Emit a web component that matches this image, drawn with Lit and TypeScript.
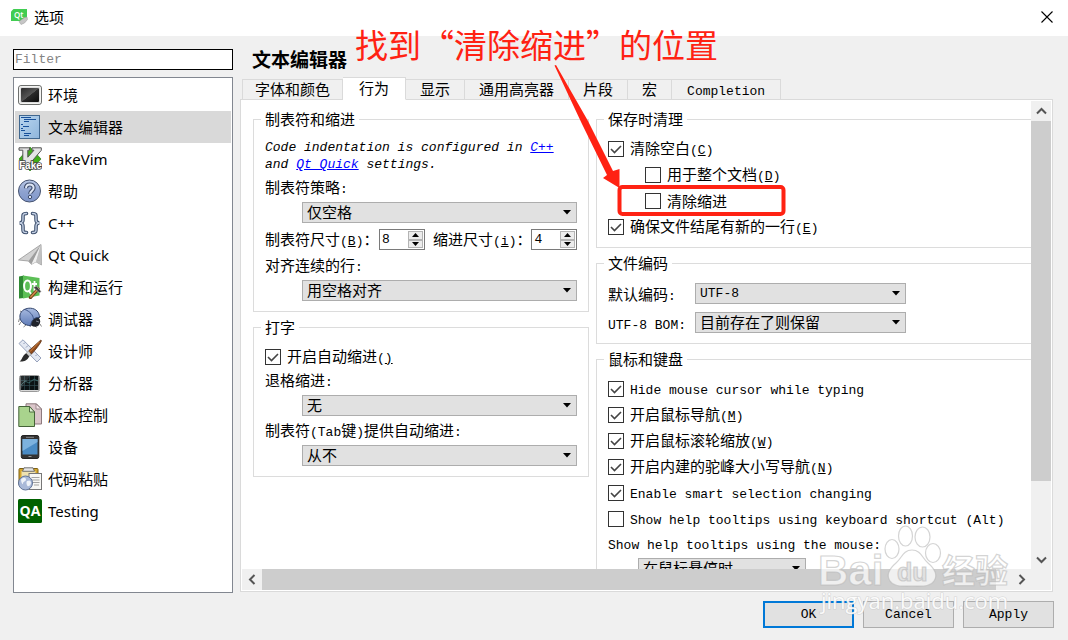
import { LitElement, html, svg, css } from "lit";
import { customElement, state, property } from "lit/decorators.js";
import { classMap } from "lit/directives/class-map.js";

// Splits a caption into ideographs and Latin runs, so each run gets its own face.
const mix = (text: string) =>
  text
    .split(/([\x20-\x7e]+)/)
    .filter((part) => part)
    .map((part) => (/^[\x20-\x7e]/.test(part) ? html`<span class="latin">${part}</span>` : part));

// Caption followed by its mnemonic in parentheses.
const keyed = (text: string, key: string, tail = "") =>
  html`${mix(text)}<span class="latin">(<u>${key}</u>)</span>${tail}`;

const base = css`
  * {
    box-sizing: border-box;
  }
  .latin {
    font-family: "Liberation Mono", monospace;
    font-size: 13px;
  }
`;

const icons: Record<string, unknown> = {
  env: svg`
    <defs><linearGradient id="e" x1="0" y1="0" x2="1" y2="1"><stop offset="0" stop-color="#2b2b2b"/><stop offset=".5" stop-color="#555"/><stop offset=".52" stop-color="#2a2a2a"/><stop offset="1" stop-color="#0c0c0c"/></linearGradient></defs>
    <rect x=".5" y="2.5" width="23" height="19" rx="2.5" fill="#dcdcdc" stroke="#6e706e"/>
    <rect x="1.5" y="3.5" width="21" height="17" rx="2" fill="none" stroke="#f4f4f2"/>
    <rect x="3" y="5" width="18" height="14" rx="1" fill="url(#e)"/>`,
  editor: svg`
    <defs><linearGradient id="t" x1="0" y1="0" x2="1" y2="1"><stop offset="0" stop-color="#b9d6ef"/><stop offset="1" stop-color="#8fb6dc"/></linearGradient></defs>
    <rect x="1.5" y=".5" width="20" height="23" fill="url(#t)" stroke="#41688f"/>
    <g stroke="#17509a"><path d="M3 2.500h10M6 4.500h12M6 6.500h5M3 9.500h2M5 11.500h6M3 13.500h2M3 15.500h4M6 18.500h7M6 20.500h5" /></g>`,
  vim: svg`
    <path d="M12 0l11 12-11 12L1 12z" fill="#3fae18" stroke="#1d6b0a" stroke-width=".6"/>
    <path d="M1 .8h10.500v2.400H9.800v7L16 3.200h-2V.8h9.300v2.500L9.500 19.500H4.800V3.200H1z" fill="#e4e4e4" stroke="#555" stroke-width="1"/>
    <text x="1" y="22" font-family="Liberation Sans" font-weight="700" font-size="10" fill="#fff" stroke="#444" stroke-width="1.600" paint-order="stroke">Fake</text>`,
  help: svg`
    <defs><linearGradient id="h" x1="0" y1="0" x2="0" y2="1"><stop offset="0" stop-color="#bccbe8"/><stop offset=".5" stop-color="#8fa3d0"/><stop offset="1" stop-color="#7f96ca"/></linearGradient></defs>
    <circle cx="11.500" cy="12" r="11" fill="url(#h)" stroke="#46536f" stroke-width="1"/>
    <path d="M8 9.200C8 6.600 9.600 5.500 11.800 5.500S15.600 6.800 15.600 9c0 2.800-3.500 3-3.500 5.800" fill="none" stroke="#3f4d6c" stroke-width="4.200"/>
    <path d="M8 9.200C8 6.600 9.600 5.500 11.800 5.500S15.600 6.800 15.600 9c0 2.800-3.500 3-3.500 5.800" fill="none" stroke="#dfe7f6" stroke-width="2"/>
    <circle cx="12" cy="18" r="1.700" fill="#dfe7f6" stroke="#3f4d6c"/>`,
  braces: svg`
    <g fill="none" stroke-linecap="round"><g stroke="#3f516e" stroke-width="3.600"><path d="M8.500 2.500C4.500 2.500 5 4 5 7s.2 4.200-3 5c3.200.8 3 2 3 5s-.5 4.500 3.500 4.500M14.500 2.500c4 0 3.500 1.500 3.500 4.500s-.2 4.200 3 5c-3.200.8-3 2-3 5s.5 4.500-3.500 4.500"/></g>
    <g stroke="#c4d0e4" stroke-width="1.400"><path d="M8.500 2.500C4.500 2.500 5 4 5 7s.2 4.200-3 5c3.200.8 3 2 3 5s-.5 4.500 3.500 4.500M14.500 2.500c4 0 3.500 1.500 3.500 4.500s-.2 4.200 3 5c-3.200.8-3 2-3 5s.5 4.500-3.500 4.500"/></g></g>`,
  plane: svg`
    <path d="M.5 17L23 1.500 23.500 22l-5.500-3.200-4.500 2.500-3.300-3.300z" fill="#d2d2d2" stroke="#8b8b8b" stroke-width=".7"/>
    <path d="M23 1.500L10.500 18l3 3.200z" fill="#9d9d9d"/><path d="M23 1.500L13.500 21.200l4.500-2.400z" fill="#eee"/><path d="M23 1.500L18 18.800l5.500 3.200z" fill="#c0c0c0"/>`,
  build: svg`
    <path d="M1 1.500L6 .5v22.500l-5 .6z" fill="#2f8a34"/><path d="M5 .5L21.500 3v17.500L5 23.500z" fill="#5cbf56"/>
    <ellipse cx="9.500" cy="11" rx="3.400" ry="5.600" fill="none" stroke="#fff" stroke-width="2"/><path d="M10.500 15l2.500 4M16.500 6v9.500q0 1.500 1.800 1M14 9h5" fill="none" stroke="#fff" stroke-width="1.800"/>
    <path d="M12.500 22.500L20 14" stroke="#6b3d18" stroke-width="3.400" stroke-linecap="round"/><path d="M12.800 22L20 14" stroke="#cf8a4a" stroke-width="1.600" stroke-linecap="round"/>
    <path d="M15.500 12.500l3-1.500 4.500 5.500-1.500 1.500-3-3z" fill="#3e3e3e" stroke="#bbb" stroke-width=".6"/>`,
  bug: svg`
    <defs><linearGradient id="b" x1="0" y1="0" x2="0" y2="1"><stop offset="0" stop-color="#a9bbe0"/><stop offset="1" stop-color="#5f7cb8"/></linearGradient></defs>
    <path d="M1.500 11.500l-1 3.500M3 15l-2 3M8 18l-2.500 2M21 11l2-2M22 17l1.500 2.500M17 19l1.500 1.500M4 5L2 4M13 18l-1 2" stroke="#777" stroke-width=".9"/>
    <circle cx="17" cy="14.500" r="5.200" fill="#20242c"/>
    <path d="M2 8C3 3 8 1 12.500 1.200c5.500.3 9 4 9 9.300-5-.5-8.500 3-8.700 8.200C6 18.500 1 14 2 8z" fill="url(#b)" stroke="#33466e" stroke-width="1"/>
    <path d="M7 2.500c5 2 8 5.500 8.500 9.500" fill="none" stroke="#40578a"/><path d="M18 14l3 1" stroke="#7a808c"/>`,
  design: svg`
    <path d="M1 4.500L5 .8 23 19l-4 4z" fill="#e3e8f2" stroke="#8d9ab5" stroke-width=".9"/><path d="M7 3.500L5.500 5M10 6.500L8 8.500M13 9.500L11.500 11M16 12.500l-2 2M19 15.500L17.500 17" stroke="#7a88a8" stroke-width=".8"/>
    <path d="M22.800 1L10.500 12l2.700 3.200C17 11.500 21.500 6 23.500 1.800z" fill="#8f4a1b" stroke="#54290d" stroke-width=".7"/><path d="M21.500 2.800L12 12.600" stroke="#d88c4a" stroke-width=".9"/>
    <path d="M10.500 12l2.700 3.200-2.200 2.200-3-3z" fill="#d0d0d0" stroke="#777" stroke-width=".5"/><path d="M8.200 14.300l3 3.200C9 22 5 23 1.500 22.500 4.500 21 4 16.500 8.200 14.300z" fill="#2b2b2b"/>`,
  scope: svg`
    <rect x="1.500" y="4.500" width="20" height="16" rx="2" fill="#d7d7d7" stroke="#9a9a9a"/><rect x="2.500" y="5" width="18" height="14" fill="#0b1214"/>
    <path d="M6.500 5v14M11.500 5v14M16.500 5v14M3 9.500h17M3 14.500h17" stroke="#2f4b50" stroke-width=".7"/><path d="M3 14l4-4 4 2 5-4 4 2" stroke="#4c8a8a" stroke-width=".6" fill="none"/><path d="M3 18L12 5H3z" fill="#fff" opacity=".12"/>`,
  files: svg`
    <path d="M8 .8h10.500L23.500 6v15H8z" fill="#dbc6ca" stroke="#8d7a7e"/><path d="M18 1v5h5.500z" fill="#f2e4e6" stroke="#8d7a7e" stroke-width=".8"/>
    <path d="M.8 3.500h11L16.500 9v14.500H.8z" fill="#a9d38d" stroke="#456339"/><path d="M11.500 3.500V9h5z" fill="#dff0d4" stroke="#456339" stroke-width=".9"/>`,
  tablet: svg`
    <rect x="3.300" y=".5" width="17.500" height="23" rx="1.800" fill="#333" stroke="#222"/><path d="M8 2.300h8" stroke="#888"/><rect x="4.500" y="4" width="15" height="15.500" fill="#4a8bc4"/><path d="M4.500 4h15v3L4.500 16z" fill="#7db2de"/><path d="M10.500 21.500h3" stroke="#999"/>`,
  paste: svg`
    <rect x="1" y="1.500" width="19" height="17" rx="1" fill="#d5a62c" stroke="#7d6014"/><rect x="3.500" y="4" width="14" height="13" fill="#efe2b0"/><path d="M6 .8h9l1.500 3.500h-12z" fill="#e4e4e4" stroke="#555" stroke-width=".8"/>
    <rect x="11" y="6.500" width="12.500" height="16" fill="#f7f7f5" stroke="#777"/><path d="M13.500 10.500h8M13.500 13h8M15 15.500h6.500M16 18h5" stroke="#999" stroke-width=".9"/>
    <circle cx="7.500" cy="16" r="7" fill="#a9b9d8" stroke="#5f7296"/><path d="M3 12.500c2-2.500 5-2 5 0s-3 2-3 4-2-1-2-4zM9 14c3-1.500 4 0 4 2s-2.500 4-3.500 3S8 15 9 14z" fill="#eef2f8"/>`,
  qa: svg`
    <rect width="24" height="24" rx="1.500" fill="#006100"/><text x="12" y="17" text-anchor="middle" font-family="Open Sans" font-weight="700" font-size="14" fill="#fff">QA</text>`,
};

const pages: [string, string][] = [
  ["env", "环境"],
  ["editor", "文本编辑器"],
  ["vim", "FakeVim"],
  ["help", "帮助"],
  ["braces", "C++"],
  ["plane", "Qt Quick"],
  ["build", "构建和运行"],
  ["bug", "调试器"],
  ["design", "设计师"],
  ["scope", "分析器"],
  ["files", "版本控制"],
  ["tablet", "设备"],
  ["paste", "代码粘贴"],
  ["qa", "Testing"],
];

const tabs = ["字体和颜色", "行为", "显示", "通用高亮器", "片段", "宏", "Completion"];

@customElement("page-list")
class PageList extends LitElement {
  @state() current = "editor";

  static styles = [
    base,
    css`
      :host {
        display: flex;
        flex-direction: column;
        gap: 7px;
        min-height: 0;
      }
      .filter {
        height: 21px;
        padding: 0 1px;
        border: 1px solid #000;
        background: #fff;
        font: 13px/19px "Liberation Mono", monospace;
        outline: 0;
      }
      .filter::placeholder {
        color: #848484;
        opacity: 1;
      }
      .list {
        flex: 1;
        min-height: 0;
        margin: 0;
        padding: 1px;
        list-style: none;
        overflow: hidden;
        background: #fff;
        border: 1px solid #828790;
      }
      .item {
        display: flex;
        align-items: center;
        gap: 6px;
        width: 100%;
        height: 32px;
        padding: 0 3px;
        border: 0;
        background: none;
        color: #000;
        font: 15px/20px "Noto Sans", "Noto Sans CJK SC", sans-serif;
        text-align: left;
      }
      .on {
        background: #d9d9d9;
      }
      .icon {
        width: 24px;
        height: 24px;
        flex: none;
      }
    `,
  ];

  render() {
    return html`
      <input class="filter" type="text" placeholder="Filter" aria-label="Filter" />
      <ul class="list">
        ${pages.map(
          ([id, name]) => html`<li>
            <button class=${classMap({ item: true, on: id === this.current })} @click=${() => (this.current = id)}>
              <svg class="icon" viewBox="0 0 24 24" aria-hidden="true">${icons[id]}</svg>${name}
            </button>
          </li>`
        )}
      </ul>
    `;
  }
}

@customElement("scroll-bar")
class ScrollBar extends LitElement {
  @property({ type: Boolean, reflect: true }) vertical = false;
  @property({ type: Number }) size = 50;

  static styles = [
    base,
    css`
      :host {
        display: flex;
        background: #f0f0f0;
      }
      :host([vertical]) {
        flex-direction: column;
      }
      .step {
        flex: none;
        display: grid;
        place-items: center;
        width: 20px;
        height: 20px;
        padding: 0;
        border: 0;
        background: none;
      }
      .track {
        flex: 1;
        min-height: 0;
        min-width: 0;
      }
      .thumb {
        background: #cdcdcd;
        height: 100%;
      }
      path {
        fill: none;
        stroke: #555;
        stroke-width: 2;
      }
    `,
  ];

  render() {
    const [back, next] = this.vertical
      ? ["M1 7.500L5.500 3L10 7.500", "M1 3.500L5.500 8L10 3.500"]
      : ["M7.500 1L3 5.500L7.500 10", "M3.500 1L8 5.500L3.500 10"];
    const span = this.vertical ? `height:${this.size}%` : `width:${this.size}%`;
    return html`
      <button class="step" aria-label="back"><svg width="11" height="11"><path d=${back} /></svg></button>
      <div class="track"><div class="thumb" style=${span}></div></div>
      <button class="step" aria-label="forward"><svg width="11" height="11"><path d=${next} /></svg></button>
    `;
  }
}

@customElement("behavior-page")
class BehaviorPage extends LitElement {
  static styles = [
    base,
    css`
      :host {
        display: grid;
        grid-template-columns: 336px 1fr;
        gap: 7px;
        align-items: start;
        width: calc(100% + 14px);
        padding: 9px 11px;
        font: 15px/17px "Noto Sans CJK SC", sans-serif;
        white-space: nowrap;
      }
      .column {
        display: flex;
        flex-direction: column;
        gap: 6px;
        min-width: 0;
      }
      fieldset {
        margin: 0;
        min-width: 0;
        padding: 10px 7px;
        border: 1px solid #dcdcdc;
      }
      legend {
        padding: 0 4px;
        height: 19px;
      }
      .rows {
        display: flex;
        flex-direction: column;
        gap: 5px;
        padding: 0 4px;
      }
      .note {
        margin: 0;
        font: italic 13px/17px "Liberation Mono", monospace;
        white-space: normal;
      }
      a {
        color: #00f;
      }
      .label {
        height: 19px;
      }
      select {
        appearance: none;
        height: 21px;
        padding: 0 20px 2px 4px;
        border: 1px solid #adadad;
        border-radius: 0;
        color: #000;
        font: 15px/17px "Noto Sans CJK SC", sans-serif;
        background: #e1e1e1
          url("data:image/svg+xml,%3Csvg xmlns='http://www.w3.org/2000/svg' width='9' height='5'%3E%3Cpath d='M1 0h8L5 4.500z'/%3E%3C/svg%3E")
          right 5px center no-repeat;
      }
      select.latin {
        padding-bottom: 0;
        font: 13px/17px "Liberation Mono", monospace;
      }
      .indent {
        margin-left: 37px;
      }
      .hover {
        align-self: flex-start;
        width: 168px;
        margin-left: 30px;
      }
      .sizes {
        display: grid;
        grid-template-columns: 114px 46px 1fr 46px;
        align-items: center;
        height: 23px;
      }
      .sizes label {
        height: 19px;
      }
      .second {
        padding-left: 8px;
      }
      .spin {
        display: flex;
        height: 21px;
        padding: 1px;
        border: 1px solid #7a7a7a;
        background: #fff;
      }
      .number {
        appearance: textfield;
        flex: 1;
        min-width: 0;
        padding: 0 1px;
        border: 0;
        font: 13px/17px "Liberation Mono", monospace;
      }
      .number::-webkit-inner-spin-button {
        display: none;
      }
      .steps {
        display: grid;
        width: 15px;
      }
      .step {
        display: grid;
        place-items: center;
        padding: 0;
        border: 1px solid #b4b4b4;
        background: #ececec;
        min-height: 0;
      }
      .checks {
        display: flex;
        flex-direction: column;
        gap: 7px;
        padding-bottom: 1px;
      }
      .check {
        display: flex;
        align-items: center;
        gap: 6px;
        height: 19px;
      }
      .check input {
        appearance: none;
        flex: none;
        width: 16px;
        height: 16px;
        margin: 0;
        border: 1px solid #333;
        background: #fff;
      }
      .check input:checked {
        background: #fff
          url("data:image/svg+xml,%3Csvg xmlns='http://www.w3.org/2000/svg' width='14' height='14'%3E%3Cpath d='M2 7l3.500 3.500L12 4' fill='none' stroke='%23444' stroke-width='1.600'/%3E%3C/svg%3E")
          center no-repeat;
      }
      .check span {
        line-height: 19px;
      }
      .encoding {
        display: grid;
        grid-template-columns: 87px 211px;
        grid-auto-rows: 21px;
        row-gap: 8px;
        padding: 0 4px;
      }
      .encoding label {
        padding-top: 2px;
      }
    `,
  ];

  check(caption: unknown, on: boolean, cls = "") {
    return html`<label class="check ${cls}"><input type="checkbox" ?checked=${on} /><span>${caption}</span></label>`;
  }

  spin(id: string, value: number) {
    return html`<span class="spin">
      <input class="number" id=${id} type="number" .value=${String(value)} />
      <span class="steps">
        <button class="step" aria-label="+"><svg width="7" height="4"><path d="M0 4h7L3.500 0z" /></svg></button>
        <button class="step" aria-label="-"><svg width="7" height="4"><path d="M0 0h7L3.500 4z" /></svg></button>
      </span>
    </span>`;
  }

  render() {
    return html`
      <div class="column">
        <fieldset>
          <legend>制表符和缩进</legend>
          <div class="rows">
            <p class="note">
              Code indentation is configured in <a href="#cpp">C++</a> and <a href="#quick">Qt Quick</a> settings.
            </p>
            <label class="label" for="policy">${mix("制表符策略:")}</label>
            <select class="indent" id="policy"><option>仅空格</option></select>
            <div class="sizes">
              <label for="tab">${keyed("制表符尺寸", "B", "：")}</label>${this.spin("tab", 8)}
              <label class="second" for="ind">${keyed("缩进尺寸", "i", "：")}</label>${this.spin("ind", 4)}
            </div>
            <label class="label" for="align">${mix("对齐连续的行:")}</label>
            <select class="indent" id="align"><option>用空格对齐</option></select>
          </div>
        </fieldset>
        <fieldset>
          <legend>打字</legend>
          <div class="rows">
            ${this.check(html`开启自动缩进<span class="latin">(<u>)</u></span>`, true)}
            <label class="label" for="back">${mix("退格缩进:")}</label>
            <select class="indent" id="back"><option>无</option></select>
            <label class="label" for="tabkey">${mix("制表符(Tab键)提供自动缩进:")}</label>
            <select class="indent" id="tabkey"><option>从不</option></select>
          </div>
        </fieldset>
      </div>
      <div class="column">
        <fieldset>
          <legend>保存时清理</legend>
          <div class="rows">
            <div class="checks">
              ${this.check(keyed("清除空白", "C"), true)} ${this.check(keyed("用于整个文档", "D"), false, "indent")}
              ${this.check("清除缩进", false, "indent")} ${this.check(keyed("确保文件结尾有新的一行", "E"), true)}
            </div>
          </div>
        </fieldset>
        <fieldset>
          <legend>文件编码</legend>
          <div class="encoding">
            <label for="enc">${mix("默认编码:")}</label>
            <select class="latin" id="enc"><option>UTF-8</option></select>
            <label for="bom">${mix("UTF-8 BOM:")}</label>
            <select id="bom"><option>目前存在了则保留</option></select>
          </div>
        </fieldset>
        <fieldset>
          <legend>鼠标和键盘</legend>
          <div class="rows">
            <div class="checks">
              ${this.check(mix("Hide mouse cursor while typing"), true)} ${this.check(keyed("开启鼠标导航", "M"), true)}
              ${this.check(keyed("开启鼠标滚轮缩放", "W"), true)}
              ${this.check(keyed("开启内建的驼峰大小写导航", "N"), true)}
              ${this.check(mix("Enable smart selection changing"), true)}
              ${this.check(mix("Show help tooltips using keyboard shortcut (Alt)"), false)}
            </div>
            <label class="label" for="hover">${mix("Show help tooltips using the mouse:")}</label>
            <select class="hover" id="hover"><option>在鼠标悬停时</option></select>
          </div>
        </fieldset>
      </div>
    `;
  }
}

@customElement("app-root")
class AppRoot extends LitElement {
  @state() tab = "行为";

  static styles = [
    base,
    css`
      :host {
        position: relative;
        display: flex;
        flex-direction: column;
        height: 100vh;
        overflow: hidden;
        background: #f0f0f0;
        color: #000;
        font: 15px/19px "Noto Sans CJK SC", sans-serif;
      }
      .title {
        display: flex;
        align-items: center;
        gap: 6px;
        height: 36px;
        padding: 0 15px 3px 11px;
        background: #fff;
      }
      .caption {
        flex: 1;
      }
      .close {
        display: flex;
        padding: 0;
        border: 0;
        background: none;
      }
      .main {
        flex: 1;
        min-height: 0;
        display: grid;
        grid-template-columns: 220px minmax(0, 1fr);
        grid-template-rows: minmax(0, 1fr);
        gap: 7px;
        padding: 13px 15px 0 13px;
      }
      .content {
        display: flex;
        flex-direction: column;
        padding-bottom: 1px;
      }
      h1 {
        margin: 0;
        padding: 0 12px 6px;
        font-size: 19px;
        line-height: 20px;
      }
      .tabs {
        position: relative;
        display: flex;
        align-items: flex-end;
        height: 25px;
        margin-bottom: -1px;
        padding-left: 2px;
      }
      .tab {
        height: 21px;
        padding: 0 14px 1px;
        border: 1px solid #dadada;
        border-left: 0;
        background: #f0f0f0;
        color: #000;
        font: 15px/18px "Noto Sans CJK SC", sans-serif;
      }
      .tab:first-child {
        padding: 0 12px 1px;
        border-left: 1px solid #dadada;
      }
      .tab:last-child {
        padding: 0 15px 1px;
      }
      .tab.on {
        height: 23px;
        padding: 0 16px 2px;
        background: #fff;
        border-bottom-color: #fff;
      }
      .panel {
        flex: 1;
        min-height: 0;
        display: grid;
        grid-template-columns: minmax(0, 1fr) 20px;
        grid-template-rows: minmax(0, 1fr) 21px;
        padding: 1px;
        border: 1px solid #dadada;
        background: #fff;
      }
      .viewport {
        overflow: hidden;
      }
      .corner {
        background: #f0f0f0;
      }
      .footer {
        display: flex;
        justify-content: flex-end;
        gap: 9px;
        padding: 8px 14px 12px;
      }
      .action {
        width: 91px;
        height: 27px;
        padding: 0;
        border: 1px solid #adadad;
        background: #e1e1e1;
        color: #000;
      }
      .default {
        border: 2px solid #0078d7;
      }
      .callout {
        position: absolute;
        left: 355px;
        top: 22px;
        margin: 0;
        color: #ff2213;
        font-size: 33px;
        line-height: 44px;
        white-space: nowrap;
      }
      .marks {
        position: absolute;
        left: 0;
        top: 0;
        pointer-events: none;
      }
    `,
  ];

  render() {
    return html`
      <header class="title">
        <svg width="17" height="17" viewBox="0 0 17 17" aria-hidden="true">
          <path d="M2.500 1H16v9l-3 3H0V3.500z" fill="#41cd52" />
          <text x="3" y="10" font-family="Open Sans" font-weight="600" font-size="8" fill="#fff">Qt</text>
          <path d="M8 13.500l5.500-4 2.500-.5.500 2.500-3 3.500-3.500 1.500z" fill="#c6c6c6" stroke="#999" stroke-width=".5" />
        </svg>
        <span class="caption">选项</span>
        <button class="close" aria-label="关闭">
          <svg width="12" height="12"><path d="M.5.5l11 11M11.500.5l-11 11" stroke="#000" stroke-width="1.100" /></svg>
        </button>
      </header>
      <main class="main">
        <page-list></page-list>
        <section class="content">
          <h1>文本编辑器</h1>
          <nav class="tabs">
            ${tabs.map(
              (name) =>
                html`<button class=${classMap({ tab: true, on: name === this.tab })} @click=${() => (this.tab = name)}>${mix(name)}</button>`
            )}
          </nav>
          <div class="panel">
            <div class="viewport"><behavior-page></behavior-page></div>
            <scroll-bar vertical size="84"></scroll-bar>
            <scroll-bar size="98"></scroll-bar>
            <div class="corner"></div>
          </div>
        </section>
      </main>
      <footer class="footer">
        <button class="action default latin">OK</button>
        <button class="action latin">Cancel</button>
        <button class="action latin">Apply</button>
      </footer>
      <p class="callout">找到“清除缩进”的位置</p>
      <svg class="marks" width="1068" height="640" viewBox="0 0 1068 640">
        <path d="M554.500 65.500L556 65L588 121L613 171L619.500 169L619.500 188L603 178L607 175L582 124z" fill="#ff2213" />
        <rect x="619.500" y="187" width="164" height="27" rx="3" fill="none" stroke="#ff2213" stroke-width="4" />
        <g fill="#fff" fill-opacity=".7" stroke="#b8b8b8" stroke-opacity=".6" stroke-width="1.200">
          <text x="818" y="585" font-family="Liberation Sans" font-weight="700" font-size="42">Bai</text>
          <text x="942" y="583" font-family="Noto Sans CJK SC" font-weight="700" font-size="33">经验</text>
          <ellipse cx="905.500" cy="536" rx="7" ry="10" />
          <ellipse cx="922.500" cy="537" rx="7.500" ry="10" />
          <ellipse cx="892" cy="549" rx="7" ry="9.500" />
          <ellipse cx="933" cy="553" rx="7.500" ry="9.500" />
          <path d="M912 550c9 0 10 8 16 13 7 6 10 12 6 18-4 6-11 5-22 5s-18 1-22-5c-4-6-1-12 6-18 6-5 7-13 16-13z" />
          <text x="897" y="581" font-family="Liberation Sans" font-weight="700" font-size="25" fill="#ddd">du</text>
        </g>
        <text x="821" y="609" font-family="Open Sans" font-size="22" fill="#fff" fill-opacity=".9" stroke="#c4c4c4" stroke-opacity=".6" stroke-width="1.200" paint-order="stroke">jingyan.baidu.com</text>
      </svg>
    `;
  }
}
